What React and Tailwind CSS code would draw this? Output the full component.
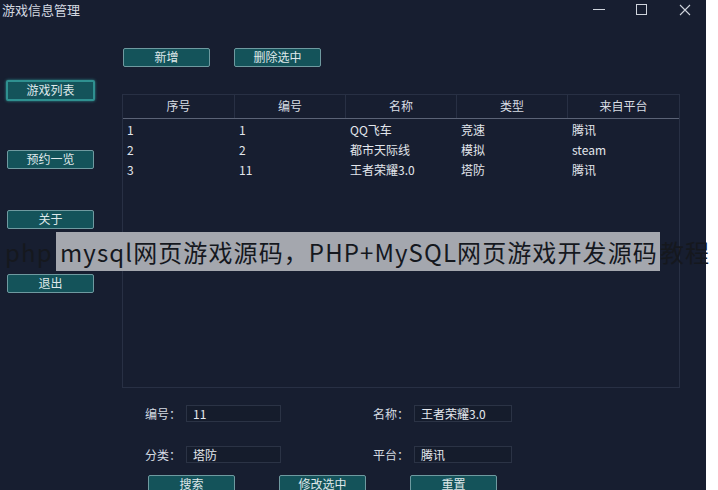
import React from 'react';

const font = { fontFamily: '"Noto Sans CJK SC", "Noto Sans", sans-serif' };

const rows = [
  { no: '1', code: '1', name: 'QQ飞车', type: '竞速', from: '腾讯' },
  { no: '2', code: '2', name: '都市天际线', type: '模拟', from: 'steam' },
  { no: '3', code: '11', name: '王者荣耀3.0', type: '塔防', from: '腾讯' },
];

const headers = ['序号', '编号', '名称', '类型', '来自平台'];

const Btn = ({ children, active, className = '' }) => (
  <button
    className={`w-[87px] h-[19px] flex items-center justify-center text-[12px] leading-none text-[#dfe8ea] bg-[#14535a] rounded-[2px] ${
      active
        ? 'border-2 border-[#2f9090] shadow-[0_0_3px_#2f9090]'
        : 'border border-[#6f9aa0]'
    } ${className}`}
  >
    {children}
  </button>
);

const Field = ({ label, value, inputWidth }) => (
  <div className="flex items-center">
    <span className="w-[41px] text-[12px] text-[#d5dbe2]">{label}</span>
    <div
      className={`${inputWidth} h-[17px] flex items-center px-[6px] text-[12px] text-[#e4e8ee] bg-[#151c2c] border border-[#2b3345]`}
    >
      {value}
    </div>
  </div>
);

export default function App() {
  return (
    <div className="relative w-[718px] h-[490px] flex bg-white overflow-hidden" style={font}>
      <div className="w-[706px] h-full flex flex-col bg-[#171e30]">
        {/* title bar */}
        <div className="h-[24px] flex items-center justify-between pl-[2px]">
          <span className="text-[13px] text-[#d3d8e0]">游戏信息管理</span>
          <div className="flex items-center text-[#cfd4dc]">
            <div className="w-[43px] flex justify-center">
              <div className="w-[12px] h-px bg-[#cfd4dc]" />
            </div>
            <div className="w-[43px] flex justify-center">
              <div className="w-[11px] h-[11px] border border-[#cfd4dc]" />
            </div>
            <div className="w-[43px] flex justify-center">
              <svg width="12" height="12" viewBox="0 0 12 12" stroke="#cfd4dc" strokeWidth="1.1">
                <path d="M1 1L11 11M11 1L1 11" />
              </svg>
            </div>
          </div>
        </div>

        <div className="flex flex-1">
          {/* sidebar */}
          <div className="w-[122px] flex flex-col pl-[7px]">
            <Btn active className="mt-[60px] -ml-[1px] w-[89px] h-[21px]">游戏列表</Btn>
            <Btn className="mt-[49px]">预约一览</Btn>
            <Btn className="mt-[41px]">关于</Btn>
            <Btn className="mt-[45px]">退出</Btn>
          </div>

          {/* main */}
          <div className="flex-1 flex flex-col">
            <div className="flex gap-[24px] pl-[1px] mt-[28px]">
              <Btn>新增</Btn>
              <Btn>删除选中</Btn>
            </div>

            <div className="mt-[27px] w-[558px] h-[294px] border border-[#283044] flex flex-col">
              <div className="grid grid-cols-[112px_111px_111px_111px_1fr] h-[24px] border-b border-[#5b6376]">
                {headers.map((h, i) => (
                  <div
                    key={h}
                    className={`flex items-center justify-center text-[12px] text-[#d8dde4] ${
                      i < 4 ? 'border-r border-[#283044]' : ''
                    }`}
                  >
                    {h}
                  </div>
                ))}
              </div>
              <div className="pt-[1px]">
                {rows.map((r) => (
                  <div
                    key={r.no}
                    className="grid grid-cols-[112px_111px_111px_111px_1fr] h-[20px] items-center text-[12px] text-[#e2e6ec]"
                  >
                    <span className="pl-[4px]">{r.no}</span>
                    <span className="pl-[4px]">{r.code}</span>
                    <span className="pl-[4px]">{r.name}</span>
                    <span className="pl-[4px]">{r.type}</span>
                    <span className="pl-[4px]">{r.from}</span>
                  </div>
                ))}
              </div>
            </div>

            <div className="mt-[17px] pl-[23px] flex flex-col gap-[23px]">
              <div className="flex gap-[92px]">
                <Field label="编号：" value="11" inputWidth="w-[95px]" />
                <Field label="名称：" value="王者荣耀3.0" inputWidth="w-[98px]" />
              </div>
              <div className="flex gap-[92px]">
                <Field label="分类：" value="塔防" inputWidth="w-[95px]" />
                <Field label="平台：" value="腾讯" inputWidth="w-[98px]" />
              </div>
            </div>

            <div className="mt-[11px] pl-[26px] flex gap-[44px]">
              <Btn>搜索</Btn>
              <Btn>修改选中</Btn>
              <Btn>重置</Btn>
            </div>
          </div>
        </div>
      </div>

      {/* watermark overlay */}
      <div className="absolute left-[5px] top-[232px] flex items-center h-[39px] text-[24px] tracking-[1.1px] text-[#15181e] whitespace-nowrap">
        <span className="w-[51px]">php</span>
        <span className="h-full flex items-center bg-[#a4a7ae] pl-[4px] pr-[2px]">mysql网页游戏源码，PHP+MySQL网页游戏开发源码</span>
        <span>教程</span>
      </div>
    </div>
  );
}
